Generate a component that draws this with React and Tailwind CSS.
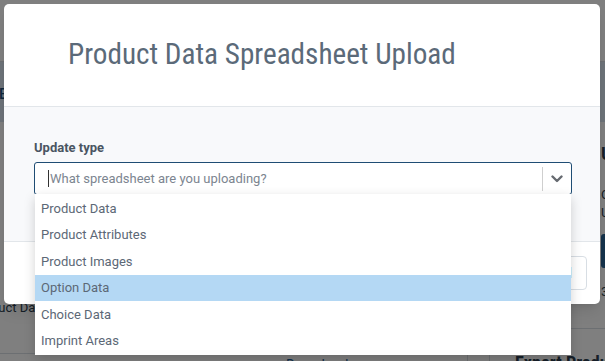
import { useState } from 'react';

const updateTypes = [
  'Product Data',
  'Product Attributes',
  'Product Images',
  'Option Data',
  'Choice Data',
  'Imprint Areas',
];

const Chevron = () => (
  <svg width="12" height="8" viewBox="0 0 12 8" fill="none">
    <path d="M1.5 1.5 L6 6 L10.5 1.5" stroke="#666a70" strokeWidth="2.4" strokeLinecap="round" strokeLinejoin="round" />
  </svg>
);

// page sitting behind the modal overlay, only slivers of it show
const BackgroundPage = () => (
  <div className="flex h-full flex-col bg-white text-[#2c3e50]">
    <div className="h-[62px] shrink-0 border-b border-[#d8dee5]" />
    <div className="flex h-[60px] shrink-0 items-center bg-[#dbe7f2] pt-[4px] text-[15px] font-medium text-[#1f4f7a]">
      <span className="-ml-[1px]">Export</span>
    </div>
    <div className="flex min-h-0 flex-1">
      <div className="flex w-[467px] shrink-0 flex-col">
        <div className="h-[176px] shrink-0" />
        <div className="flex h-[56px] shrink-0 items-start border-b border-[#d8dee5] text-[13px]">
          <span className="-ml-[29px]">Product Data</span>
        </div>
        <div className="pl-[286px] pt-[1px] text-[14px] text-[#1f5f99]">Download</div>
      </div>
      <div className="w-[23px] shrink-0 border-x border-[#d8dee5]" />
      <div className="flex min-w-0 flex-1 flex-col overflow-hidden">
        <div className="flex flex-col pl-[111px] pt-[22px]">
          <span className="whitespace-nowrap text-[18px] font-bold leading-[20px]">Upload</span>
          <span className="mt-[22px] whitespace-nowrap text-[13px] leading-[18px]">Or</span>
          <span className="whitespace-nowrap text-[13px] leading-[18px]">Use</span>
          <span className="mt-[12px] h-[34px] w-[60px] shrink-0 rounded-[3px] bg-[#2a6496]" />
          <span className="mt-[14px] text-[13px]">3</span>
        </div>
        <div className="mt-[26px] border-b border-[#d8dee5]" />
        <div className="whitespace-nowrap pl-[25px] pt-[20px] font-['Roboto_Condensed','Roboto',sans-serif] text-[18px] font-bold">Export Products</div>
      </div>
    </div>
  </div>
);

const UploadModal = () => {
  const [active] = useState('Option Data');
  return (
    <div className="absolute left-[4px] top-[4px] w-[596px] rounded-[5px] bg-white shadow-lg">
      <div className="flex h-[103px] items-center border-b border-[#e2e6ea] pl-[64px]">
        <h1 className="font-['Roboto_Condensed','Roboto',sans-serif] text-[29.2px] font-normal text-[#5b6a79]">Product Data Spreadsheet Upload</h1>
      </div>
      <div className="h-[134px] bg-[#f8f9fb] pl-[30px] pr-[28px] pt-[33px]">
        <label className="block text-[13px] font-bold leading-[15px] text-[#4a5562]">Update type</label>
        <div className="relative z-10 mt-[7px] flex h-[33px] items-center rounded-[3px] border border-[#1f4d74] bg-white">
          <div className="flex flex-1 items-center pl-[13px] text-[13px] text-[#7c8590]">
            <span className="mr-[1px] h-[17px] w-px bg-[#333]" />
            What spreadsheet are you uploading?
          </div>
          <span className="h-[24px] w-px bg-[#cfcfcf]" />
          <div className="flex w-[28px] items-center justify-center">
            <Chevron />
          </div>
          <ul className="absolute left-[0px] right-[0px] top-full bg-white pb-[1px] pt-[1.5px] shadow-[0_4px_11px_rgba(0,0,0,0.18)]">
            {updateTypes.map((item) => (
              <li
                key={item}
                className={`flex h-[26.4px] items-center pl-[6px] text-[13px] text-[#5c6876] ${item === active ? 'bg-[#b4d8f4]' : ''}`}
              >
                {item}
              </li>
            ))}
          </ul>
        </div>
      </div>
      <div className="flex h-[63px] items-center justify-end rounded-b-[5px] border-t border-[#e2e6ea] pr-[13px]">
        <button className="h-[34px] rounded-[4px] border border-[#d8dee4] px-[14px] text-[14px] text-[#2c3e50]">Cancel</button>
      </div>
    </div>
  );
};

export default function App() {
  return (
    <div className="relative h-[361px] w-[605px] overflow-hidden font-['Roboto',sans-serif]">
      <BackgroundPage />
      <div className="absolute inset-0 bg-black/50" />
      <UploadModal />
    </div>
  );
}
